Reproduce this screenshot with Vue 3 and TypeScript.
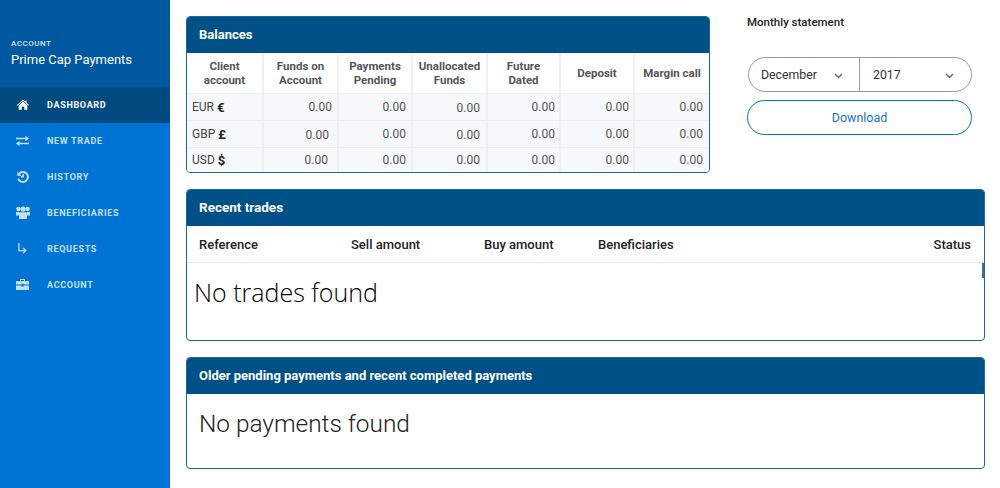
<script setup lang="ts">
interface NavItem { label: string; icon: string; active?: boolean }
const nav: NavItem[] = [
  { label: 'DASHBOARD', icon: 'home', active: true },
  { label: 'NEW TRADE', icon: 'exchange' },
  { label: 'HISTORY', icon: 'history' },
  { label: 'BENEFICIARIES', icon: 'users' },
  { label: 'REQUESTS', icon: 'turn' },
  { label: 'ACCOUNT', icon: 'case' },
]
const heads: string[][] = [
  ['Client', 'account'], ['Funds on', 'Account'], ['Payments', 'Pending'],
  ['Unallocated', 'Funds'], ['Future', 'Dated'], ['Deposit'], ['Margin call'],
]
interface Cell { right: number; down: number }
interface Row { code: string; sym: string; h: string; cells: Cell[] }
const rows: Row[] = [
  { code: 'EUR', sym: '€', h: 'r1', cells: [{ right: 5, down: 0 }, { right: 5, down: 0 }, { right: 6, down: 2 }, { right: 4, down: 0 }, { right: 4, down: 0 }, { right: 6, down: 0 }] },
  { code: 'GBP', sym: '£', h: 'r2', cells: [{ right: 8, down: 2 }, { right: 5, down: 0 }, { right: 6, down: 2 }, { right: 4, down: 0 }, { right: 4, down: 0 }, { right: 6, down: 0 }] },
  { code: 'USD', sym: '$', h: 'r3', cells: [{ right: 9, down: 0 }, { right: 5, down: 0 }, { right: 6, down: 0 }, { right: 4, down: 0 }, { right: 4, down: 0 }, { right: 6, down: 0 }] },
]
const tradeCols = ['Reference', 'Sell amount', 'Buy amount', 'Beneficiaries', 'Status']
</script>

<template>
  <div class="page">
    <aside class="side">
      <div class="brand">
        <div class="brand-small">ACCOUNT</div>
        <div class="brand-name">Prime Cap Payments</div>
      </div>
      <nav>
        <div v-for="n in nav" :key="n.label" class="nav-item" :class="{ active: n.active }">
          <span class="ico">
            <svg v-if="n.icon === 'home'" width="12" height="11" viewBox="0 0 14 12"><path fill="currentColor" d="M7 .3 9.6 2.6V1.2h1.7v2.9L14 6.5l-.8.9L7 2 .8 7.4 0 6.5zM2 7.2 7 2.9l5 4.3V12H8.4V8.6H5.6V12H2z"/></svg>
            <svg v-else-if="n.icon === 'exchange'" width="13" height="12" viewBox="0 0 14 12"><path fill="currentColor" d="M0 2.6h10.2V.4L14 3.4l-3.8 3V4.2H0zM14 7.8H3.8V5.6L0 8.6l3.8 3V9.4H14z"/></svg>
            <svg v-else-if="n.icon === 'history'" width="12" height="12" viewBox="0 0 12 12"><path fill="none" stroke="currentColor" stroke-width="2" d="M2.2 2.6A5 5 0 1 1 1.2 7.6"/><path fill="currentColor" d="M.4.8 4.6 4.8.4 5zM5.4 3h1.5v3.4h-3V5h1.5z"/></svg>
            <svg v-else-if="n.icon === 'users'" width="14" height="13" viewBox="0 0 14 13"><circle fill="currentColor" cx="7" cy="3" r="2.6"/><circle fill="currentColor" cx="2.4" cy="3" r="2.2"/><circle fill="currentColor" cx="11.6" cy="3" r="2.2"/><path fill="currentColor" d="M0 6h3.2v3.5H0zM14 6h-3.2v3.5H14zM3.6 6.2h6.8l.5 1V13H3.1V7.2z"/></svg>
            <svg v-else-if="n.icon === 'turn'" width="9" height="11" viewBox="0 0 9 11"><path fill="none" stroke="currentColor" stroke-width="1.3" d="M.9 0v7.6h6.4M5 5l2.8 2.6L5 10.4"/></svg>
            <svg v-else width="13" height="11" viewBox="0 0 13 11"><path fill="currentColor" d="M4 2V.6L4.6 0h3.8l.6.6V2h4v3.6H7.6v-.8H5.4v.8H0V2zM5 2h3V1H5zM0 6.4h5.4v1h2.2v-1H13V11H0z"/></svg>
          </span>
          <span class="nav-label">{{ n.label }}</span>
        </div>
      </nav>
    </aside>

    <main class="main">
      <div class="top">
        <section class="card balances">
          <h2 class="card-head small">Balances</h2>
          <div class="grid head-row">
            <div v-for="h in heads" :key="h[0]" class="th">
              <span v-for="l in h" :key="l">{{ l }}</span>
            </div>
          </div>
          <div v-for="r in rows" :key="r.code" class="grid row" :class="r.h">
            <div class="td first">{{ r.code }} <b class="sym">{{ r.sym }}</b></div>
            <div
              v-for="(c, i) in r.cells"
              :key="i"
              class="td"
              :style="{ paddingRight: c.right + 'px', paddingTop: c.down + 'px' }"
            >0.00</div>
          </div>
        </section>

        <aside class="statement">
          <div class="st-title">Monthly statement</div>
          <div class="selects">
            <div class="sel month"><span>December</span><svg width="9" height="6" viewBox="0 0 9 6"><path fill="none" stroke="#666" stroke-width="1.4" d="M1 1l3.5 3.5L8 1"/></svg></div>
            <div class="sel year"><span>2017</span><svg width="9" height="6" viewBox="0 0 9 6"><path fill="none" stroke="#666" stroke-width="1.4" d="M1 1l3.5 3.5L8 1"/></svg></div>
          </div>
          <button class="dl">Download</button>
        </aside>
      </div>

      <section class="card trades">
        <h2 class="card-head mid">Recent trades</h2>
        <div class="trade-cols">
          <span v-for="c in tradeCols" :key="c">{{ c }}</span>
        </div>
        <div class="empty e1">No trades found</div>
        <span class="notch"></span>
      </section>

      <section class="card older">
        <h2 class="card-head small">Older pending payments and recent completed payments</h2>
        <div class="empty e2">No payments found</div>
      </section>
    </main>
  </div>
</template>

<style>
html, body { margin: 0; background: #fff; overflow: hidden; }
</style>

<style scoped>
.page { display: flex; width: 1000px; height: 488px; font-family: Roboto, sans-serif; overflow: hidden; }
.side { width: 170px; height: 488px; background: #0074d4; flex: none; }
.brand { height: 87px; box-sizing: border-box; padding-top: 39px; padding-left: 11px; background: #0059a0; color: #fff; }
.brand-small { font-size: 8px; line-height: 10px; font-weight: 500; letter-spacing: .5px; color: #cfe3f5; }
.brand-name { font-size: 13px; line-height: 18px; margin-top: 2px; font-weight: 400; }
.nav-item { height: 36px; display: flex; align-items: center; color: #c2e0fa; padding-bottom: 1px; box-sizing: border-box; }
.nav-item.active { background: #004a80; color: #fff; }
.ico { width: 13px; margin: 0 17px 0 16px; flex: none; display: flex; justify-content: center; }
.ico svg { display: block; flex: none; }
.nav-label { font-size: 9px; font-weight: 700; letter-spacing: .68px; margin-left: 1px; }

.main { flex: 1; padding: 16px 15px 0 16px; box-sizing: border-box; }
.top { display: flex; height: 173px; }
.card { position: relative; border: 1px solid #1c6a9c; border-radius: 4px; box-sizing: border-box; overflow: hidden; background: #fff; }
.card-head { margin: 0; background: #005187; color: #fff; font-weight: 700; padding: 0 0 2px 12px; box-sizing: border-box; display: flex; align-items: center; height: 36px; }
.card-head.small { font-size: 13px; }
.card-head.mid { font-size: 13.5px; }
.balances { width: 524px; height: 157px; }
.grid { display: grid; grid-template-columns: 77px 75px 74px 75px 73px 74px 74px; }
.head-row { height: 41px; border-bottom: 1px solid #eee; box-sizing: border-box; }
.th { display: flex; flex-direction: column; justify-content: center; align-items: center; border-right: 2px solid #f0f0f0; color: #555; font-size: 11.5px; line-height: 14px; font-weight: 700; box-sizing: border-box; padding-bottom: 1px; }
.th:last-child { border-right: none; }
.row { background: #f7f8f9; border-bottom: 1px solid #eceff1; box-sizing: border-box; }
.r1, .r2 { height: 27px; }
.r3 { height: 24px; border-bottom: none; }
.td { border-right: 2px solid #eef0f1; font-size: 12px; color: #555; display: flex; align-items: center; justify-content: flex-end; box-sizing: border-box; }
.td:last-child { border-right: none; }
.td.first { justify-content: flex-start; padding-left: 5px; color: #444; gap: 3px; }
.sym { font-size: 13px; color: #222; font-weight: 700; }

.statement { margin-left: 37px; width: 225px; }
.st-title { font-size: 11.5px; line-height: 14px; font-weight: 500; color: #222; margin-top: -1px; }
.selects { display: flex; height: 35px; margin-top: 28px; border: 1px solid #999; border-radius: 18px; box-sizing: border-box; margin-left: 1px; }
.sel { display: flex; align-items: center; justify-content: space-between; font-size: 12.3px; color: #333; box-sizing: border-box; }
.month { width: 111px; padding: 0 16px 0 12px; border-right: 1px solid #999; }
.year { flex: 1; padding: 0 17px 0 13px; }
.sel svg { margin-top: 3px; }
.dl { display: block; width: 225px; height: 35px; margin-top: 8px; border: 1px solid #0074d4; border-radius: 18px; background: #fff; color: #1a73c8; font-family: Roboto, sans-serif; font-size: 12.5px; padding: 0; }

.trades { width: 799px; height: 152px; }
.trade-cols { height: 37px; border-bottom: 1px solid #e2e2e2; box-sizing: border-box; display: grid; grid-template-columns: 152px 133px 114px 1fr auto; padding: 0 13px 0 12px; align-items: center; font-size: 13px; font-weight: 500; color: #222; }
.notch { position: absolute; right: 0; top: 73px; width: 2px; height: 15px; background: #3f6f8f; }
.empty { color: #222; }
.e1 { font-family: "Open Sans", sans-serif; font-size: 25px; line-height: 36px; padding: 11px 0 0 7px; font-weight: 300; color: #000; }
.older { width: 799px; height: 112px; margin-top: 16px; }
.e2 { font-family: Roboto, sans-serif; font-weight: 300; font-size: 24.4px; line-height: 36px; padding: 12px 0 0 12px; }
</style>
